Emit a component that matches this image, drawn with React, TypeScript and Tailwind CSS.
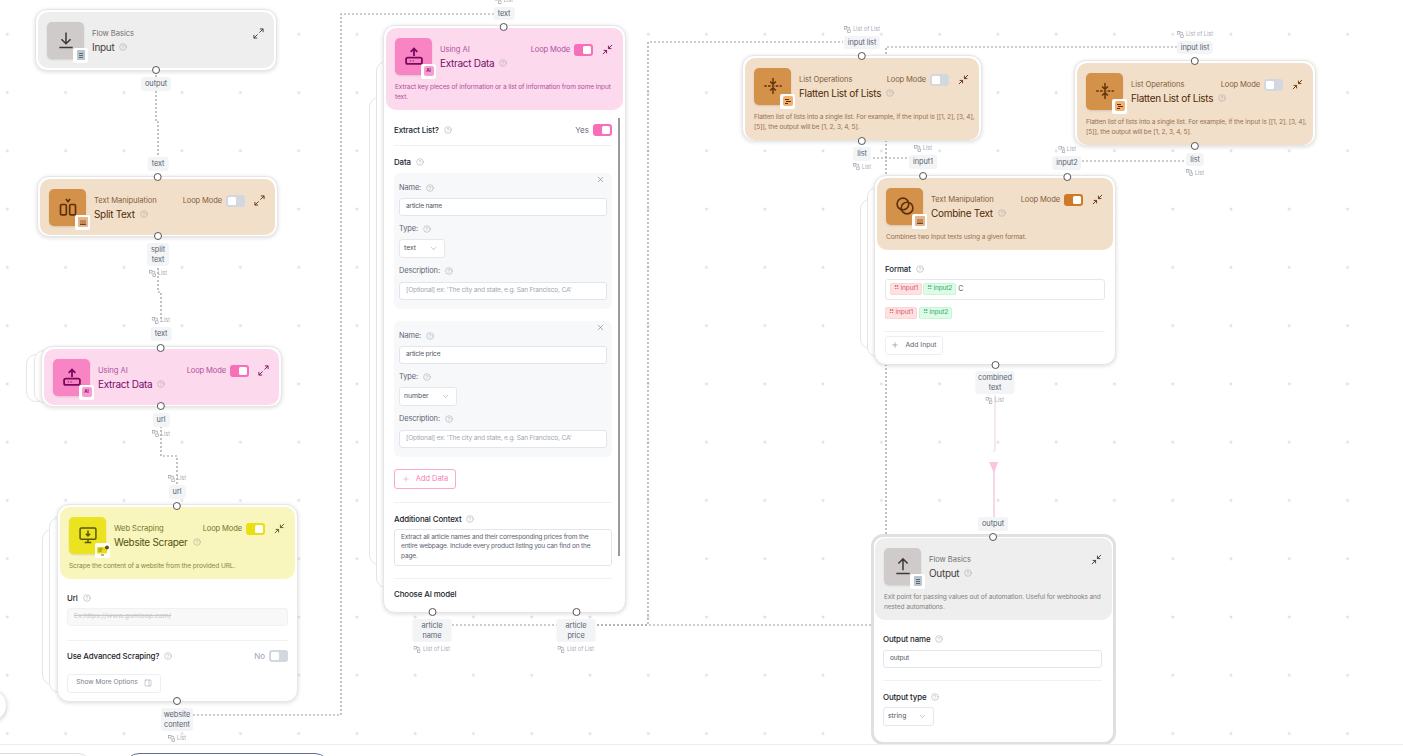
import { ChevronDown, CircleHelp, Plus, X, PanelRight } from "lucide-react";
import type { ReactNode } from "react";

type Theme = "gray" | "orange" | "pink" | "yellow";

const themes = {
  gray: { head: "bg-[#eeeeee]", box: "bg-[#cfcbcb]", ink: "#3d3838", label: "text-[#77716f]", title: "text-[#4a4040]", desc: "text-[#857f7f]", on: "bg-[#8a8a8a]" },
  orange: { head: "bg-[#f2dfca]", box: "bg-[#d3914a]", ink: "#5f3008", label: "text-[#84603c]", title: "text-[#4f2c08]", desc: "text-[#96714f]", on: "bg-[#cf7a26]" },
  pink: { head: "bg-[#fcd9ec]", box: "bg-[#f984c3]", ink: "#7a0a60", label: "text-[#b0509f]", title: "text-[#7a0a6c]", desc: "text-[#b0509f]", on: "bg-[#f76fb8]" },
  yellow: { head: "bg-[#f8f5bd]", box: "bg-[#ebe31f]", ink: "#5a5608", label: "text-[#77752c]", title: "text-[#54520f]", desc: "text-[#8a8840]", on: "bg-[#e8e010]" },
};

function Help({ size = 8 }: { size?: number }) {
  return <CircleHelp size={size} strokeWidth={1.5} className="shrink-0 text-[#a3a3a3]" />;
}

function Toggle({ on, color }: { on: boolean; color?: string }) {
  return (
    <span className={`flex h-[12px] w-[19px] shrink-0 items-center rounded-[3px] p-[2px] ${on ? "justify-end" : "justify-start bg-[#d3d8e0]"} ${on ? color : ""}`}>
      <span className="block h-[8px] w-[8px] rounded-[1.5px] bg-white" />
    </span>
  );
}

function Arrows({ open, ink }: { open: boolean; ink: string }) {
  return (
    <svg width="11" height="11" viewBox="0 0 12 12" fill="none" stroke={ink} strokeWidth="1" className="shrink-0">
      {open ? (
        <>
          <path d="M7 5l4-4M7.5 1H11v3.5" />
          <path d="M1 11l4-4M1 7.5V11h3.5" />
        </>
      ) : (
        <>
          <path d="M11 1L7 5M7 1.8V5h3.2" />
          <path d="M1 11l4-4M1.8 7H5v3.2" />
        </>
      )}
    </svg>
  );
}

function Glyph({ kind, ink }: { kind: string; ink: string }) {
  const common = { width: 20, height: 20, viewBox: "0 0 24 24", fill: "none", stroke: ink, strokeWidth: 1.8 };
  if (kind === "in")
    return <svg {...common}><path d="M12 3v13M6.5 11l5.5 5.5 5.5-5.5M4 21h16" /></svg>;
  if (kind === "out")
    return <svg {...common}><path d="M12 17V4M6.5 9L12 3.5 17.5 9M4 21h16" /></svg>;
  if (kind === "split")
    return (
      <svg {...common} strokeWidth={2}>
        <rect x="3" y="9" width="7" height="12.5" rx="1.5" />
        <rect x="14" y="9" width="7" height="12.5" rx="1.5" />
        <path d="M9.5 2.5l2.5 3 2.5-3" />
      </svg>
    );
  if (kind === "extract")
    return (
      <svg {...common} strokeWidth={2.2}>
        <path d="M12 12V3.5M8 7l4-4 4 4" />
        <rect x="2.5" y="14" width="19" height="7.5" rx="2" />
        <path d="M7 17.8h.8M10.5 17.8h.8" />
      </svg>
    );
  if (kind === "web")
    return (
      <svg {...common}>
        <rect x="2.5" y="3.5" width="19" height="13.5" rx="1.5" />
        <path d="M12 6.5v6.5M9.5 10.5L12 13l2.5-2.5M12 17v4M8 21h8" />
      </svg>
    );
  if (kind === "flat")
    return (
      <svg {...common} strokeWidth={1.7}>
        <path d="M12 2.5V9M8.5 6.5L12 10l3.5-3.5M12 21.5V15M8.5 17.5L12 14l3.5 3.5" />
        <path d="M1.5 12h21" strokeDasharray="3 1.6" />
      </svg>
    );
  return (
    <svg {...common} strokeWidth={2}>
      <circle cx="9.5" cy="9.5" r="7" />
      <circle cx="14.5" cy="14.5" r="7" />
    </svg>
  );
}

function Badge({ kind }: { kind: string }) {
  let inner: ReactNode;
  if (kind === "ai")
    inner = <span className="flex h-[10px] w-[10px] items-center justify-center rounded-[2px] bg-[#fa9ccf] text-[4.5px] font-bold text-[#8a1070]">AI</span>;
  else if (kind === "basic")
    inner = (
      <span className="flex h-[10px] w-[8px] flex-col items-center justify-center gap-[1px] rounded-[1px] bg-[#b9c6cf]">
        <span className="h-[1px] w-[4px] bg-[#5f6b75]" />
        <span className="h-[1px] w-[4px] bg-[#5f6b75]" />
        <span className="h-[1px] w-[4px] bg-[#5f6b75]" />
      </span>
    );
  else if (kind === "web")
    inner = (
      <svg width="12" height="11" viewBox="0 0 12 11">
        <rect x="0" y="2" width="10" height="6.5" rx="1" fill="#e6dc18" />
        <path d="M1.5 4h4M1.5 6h3" stroke="#6e6a10" strokeWidth="0.8" />
        <circle cx="10" cy="2.5" r="2" fill="#5a5608" />
        <path d="M4 10h3" stroke="#6e6a10" />
      </svg>
    );
  else if (kind === "list")
    inner = (
      <span className="flex h-[10px] w-[10px] flex-col justify-center gap-[1px] rounded-[2px] bg-[#f0b070] px-[2px]">
        <span className="h-[1px] w-[4px] bg-[#5f3008]" />
        <span className="ml-[1px] h-[1px] w-[5px] bg-[#5f3008]" />
        <span className="h-[1px] w-[3px] bg-[#5f3008]" />
      </span>
    );
  else
    inner = (
      <span className="flex h-[10px] w-[10px] items-center justify-center rounded-[1px] bg-[#e8b48a]">
        <span className="h-[5px] w-[6px] border-b border-[#6a4420] bg-[#c08858]" />
      </span>
    );
  return (
    <span className="absolute -bottom-[4px] -right-[4px] flex h-[15px] w-[15px] items-center justify-center rounded-[2px] bg-white">
      {inner}
    </span>
  );
}

function Header({
  theme, group, title, kind, badge, loop, open, desc, loopOn,
}: {
  theme: Theme; group: string; title: string; kind: string; badge: string;
  loop?: boolean; loopOn?: boolean; open: boolean; desc?: string;
}) {
  const t = themes[theme];
  return (
    <div className={`rounded-[10px] px-[9px] pt-[9.5px] ${desc ? "pb-[8px]" : "pb-[9px]"} ${t.head}`}>
      <div className="flex items-start">
        <div className={`relative flex h-[37px] w-[37px] shrink-0 items-center justify-center rounded-[5px] shadow-[0_1px_2px_rgba(0,0,0,0.12)] ${t.box}`}>
          <Glyph kind={kind} ink={t.ink} />
          <Badge kind={badge} />
        </div>
        <div className="ml-[8px] min-w-0 flex-1 pt-[7px]">
          <div className="flex h-[10px] items-center">
            <span className={`text-[7.6px] leading-[10px] tracking-[-0.05px] ${t.label}`}>{group}</span>
            <span className="flex-1" />
            {loop && <span className={`mr-[4px] text-[7.6px] leading-[10px] tracking-[-0.15px] ${t.label}`}>Loop Mode</span>}
            {loop && <Toggle on={!!loopOn} color={t.on} />}
            <span className="ml-[9px] mr-[1px]"><Arrows open={open} ink={t.ink} /></span>
          </div>
          <div className="mt-[2px] flex items-center gap-[5px]">
            <span className={`text-[10px] leading-[13px] tracking-[-0.3px] ${t.title}`}>{title}</span>
            <Help />
          </div>
        </div>
      </div>
      {desc && <p className={`-mr-[7px] mt-[7px] text-[6.6px] leading-[10px] tracking-[-0.13px] ${t.desc}`}>{desc}</p>}
    </div>
  );
}

function Card({ className, children }: { className: string; children: ReactNode }) {
  return (
    <div className={`absolute overflow-hidden rounded-[12px] border border-[#e6e6e6] bg-white p-[2px] shadow-[0_1px_4px_rgba(0,0,0,0.14)] ${className}`}>
      {children}
    </div>
  );
}

function Ghost({ className }: { className: string }) {
  return <div className={`absolute rounded-[10px] border border-[#e5e5e5] bg-white ${className}`} />;
}

// a column of handle, port label and list tag hanging off a node
function Stack({ className, children }: { className: string; children: ReactNode }) {
  return <div className={`absolute z-20 flex -translate-x-1/2 flex-col items-center ${className}`}>{children}</div>;
}

function Handle() {
  return <span className="block h-[8px] w-[8px] shrink-0 rounded-full border border-[#555] bg-white" />;
}

function Port({ className = "", children }: { className?: string; children: ReactNode }) {
  return (
    <span className={`flex shrink-0 items-center justify-center rounded-[3px] bg-[#f3f4f6] px-[4px] py-[2px] text-center text-[7.4px] leading-[9.5px] tracking-[-0.1px] text-[#5b6472] ${className}`}>
      {children}
    </span>
  );
}

function Tag({ children = "List" }: { children?: string }) {
  return (
    <span className="flex h-[8px] shrink-0 items-center gap-[2px] whitespace-nowrap text-[5.6px] leading-[8px] text-[#a7adb8]">
      <svg width="7" height="7" viewBox="0 0 8 8" fill="none" stroke="#9aa0aa" strokeWidth="0.8">
        <rect x="0.5" y="0.5" width="3" height="3" />
        <rect x="4.5" y="4.5" width="3" height="3" />
        <path d="M4 1.5h2.5V4" />
      </svg>
      {children}
    </span>
  );
}

function FieldLabel({ children, className = "", help = true }: { children: string; className?: string; help?: boolean }) {
  return (
    <div className={`flex h-[10px] items-center gap-[5px] ${className}`}>
      <span className="text-[7.9px] font-medium leading-[10px] tracking-[-0.12px] text-[#20242c]">{children}</span>
      {help && <Help />}
    </div>
  );
}

function SubLabel({ children, className = "" }: { children: string; className?: string }) {
  return (
    <div className={`flex h-[10px] items-center gap-[5px] ${className}`}>
      <span className="text-[7.4px] leading-[10px] tracking-[-0.1px] text-[#5c6370]">{children}</span>
      <Help />
    </div>
  );
}

function Input({ children, muted, className = "" }: { children: string; muted?: boolean; className?: string }) {
  return (
    <div className={`flex h-[18px] items-center rounded-[3px] border border-[#e2e5ec] bg-white px-[6px] text-[6.6px] tracking-[-0.2px] ${muted ? "text-[#a2a8b3]" : "text-[#4e5563]"} ${className}`}>
      {children}
    </div>
  );
}

function Select({ children, className }: { children: string; className: string }) {
  return (
    <div className={`flex h-[19px] items-center justify-between rounded-[3px] border border-[#e5e7eb] bg-white pl-[4px] pr-[6px] text-[6.8px] text-[#4e5563] ${className}`}>
      {children}
      <ChevronDown size={9} strokeWidth={1.2} className="text-[#7b8190]" />
    </div>
  );
}

function Rule({ className }: { className: string }) {
  return <div className={`h-px bg-[#f0f1f3] ${className}`} />;
}

function DataPanel({ name, type, selectW, className }: { name: string; type: string; selectW: string; className: string }) {
  return (
    <div className={`relative h-[136px] rounded-[6px] bg-[#f7f8fa] px-[5px] pt-[10px] ${className}`}>
      <X size={9} strokeWidth={1.2} className="absolute right-[7px] top-[2px] text-[#4b5563]" />
      <SubLabel>Name:</SubLabel>
      <Input className="mt-[5px]">{name}</Input>
      <SubLabel className="mt-[8px]">Type:</SubLabel>
      <Select className={`mt-[5px] ${selectW}`}>{type}</Select>
      <SubLabel className="mt-[8px]">Description:</SubLabel>
      <Input muted className="mt-[6px]">[Optional] ex: 'The city and state, e.g. San Francisco, CA'</Input>
    </div>
  );
}

function Chip({ red, children }: { red?: boolean; children: string }) {
  return (
    <span className={`flex h-[12px] items-center rounded-[2px] border px-[3px] text-[6.6px] tracking-[-0.15px] ${red ? "border-[#fcd5d5] bg-[#fee2e2] text-[#d9576a]" : "border-[#c9f5d8] bg-[#dcfce7] text-[#3aa86a]"}`}>
      ⠿&nbsp;{children}
    </span>
  );
}

function Canvas() {
  const dash = { fill: "none", stroke: "#999999", strokeWidth: 1.2, strokeDasharray: "2 2" };
  return (
    <svg className="absolute inset-0" width="1403" height="756">
      <defs>
        <pattern id="dots" x="7.3" y="34.3" width="58.27" height="58.27" patternUnits="userSpaceOnUse">
          <path d="M-1.5 0h3M0-1.5v3M56.77 0h3M58.27-1.5v3M-1.5 58.27h3M0 56.77v3M56.77 58.27h3M58.27 56.77v3" stroke="#cfcfcf" strokeWidth="0.8" />
        </pattern>
      </defs>
      <rect width="1403" height="756" fill="url(#dots)" />
      <path d="M156 75V122H158V172" {...dash} />
      <path d="M158 264V292H161V322" {...dash} />
      <path d="M161 426V456H177V486" {...dash} />
      <path d="M193 715H341V14H495" {...dash} />
      <path d="M452 625H558" {...dash} />
      <path d="M597 625H648V42H843" {...dash} />
      <path d="M597 625H886V47H1177" {...dash} />
      <path d="M873 158H911" {...dash} />
      <path d="M1082 161H1186" {...dash} />
      <path d="M995 395V450L993 452" fill="none" stroke="#e8d4de" strokeWidth="1" />
      <path d="M994 462V520" fill="none" stroke="#f9c4de" strokeWidth="1.4" />
      <path d="M989 462H998L994 473Z" fill="#f9c4de" />
    </svg>
  );
}

export default function App() {
  return (
    <div className="relative h-[756px] w-[1403px] overflow-hidden bg-white font-['Inter',sans-serif]">
      <Canvas />

      {/* Input */}
      <Card className="left-[35px] top-[9px] h-[62px] w-[242px]">
        <Header theme="gray" group="Flow Basics" title="Input" kind="in" badge="basic" open />
      </Card>

      {/* Split Text */}
      <Card className="left-[37px] top-[176px] h-[61px] w-[241px]">
        <Header theme="orange" group="Text Manipulation" title="Split Text" kind="split" badge="text" loop open />
      </Card>

      {/* Extract Data, collapsed */}
      <Ghost className="left-[26px] top-[354px] h-[48px] w-[60px]" />
      <Ghost className="left-[34px] top-[350px] h-[53px] w-[60px]" />
      <Card className="left-[41px] top-[346px] h-[61px] w-[241px]">
        <Header theme="pink" group="Using AI" title="Extract Data" kind="extract" badge="ai" loop loopOn open />
      </Card>

      {/* Website Scraper */}
      <Ghost className="left-[42px] top-[529px] h-[156px] w-[60px]" />
      <Ghost className="left-[49px] top-[517px] h-[176px] w-[60px]" />
      <Card className="left-[57px] top-[504px] h-[198px] w-[241px]">
        <Header theme="yellow" group="Web Scraping" title="Website Scraper" kind="web" badge="web" loop loopOn open={false} desc="Scrape the content of a website from the provided URL." />
        <div className="px-[7px] pt-[14px]">
          <FieldLabel>Url</FieldLabel>
          <div className="mt-[5px] flex h-[18px] items-center rounded-[3px] border border-[#f0f1f3] bg-[#f8f8f8] px-[6px] text-[6.8px] text-[#c6c8cc] line-through">
            Ex:https://www.gumloop.com/
          </div>
          <Rule className="mt-[14px]" />
          <div className="mt-[9px] flex items-center">
            <FieldLabel>Use Advanced Scraping?</FieldLabel>
            <span className="flex-1" />
            <span className="mr-[4px] text-[8px] text-[#9ca3af]">No</span>
            <Toggle on={false} />
          </div>
          <div className="mt-[12px] flex h-[19px] w-[94px] items-center justify-center gap-[6px] rounded-[3px] border border-[#eceef1] text-[6.6px] text-[#7b8190]">
            Show More Options
            <PanelRight size={8} strokeWidth={1.2} />
          </div>
        </div>
      </Card>

      {/* Extract Data, open */}
      <Ghost className="left-[369px] top-[97px] h-[468px] w-[60px]" />
      <Ghost className="left-[376px] top-[61px] h-[527px] w-[60px]" />
      <Card className="left-[383px] top-[25px] h-[588px] w-[243px]">
        <Header theme="pink" group="Using AI" title="Extract Data" kind="extract" badge="ai" loop loopOn open={false} desc="Extract key pieces of information or a list of information from some input text." />
        <div className="relative px-[8px] pt-[14px]">
          <span className="absolute right-[3px] top-[8px] h-[438px] w-[2px] bg-[#9a9a9a]" />
          <div className="mr-[3px] flex items-center">
            <FieldLabel>Extract List?</FieldLabel>
            <span className="flex-1" />
            <span className="mr-[4px] text-[8px] text-[#6b7280]">Yes</span>
            <Toggle on color="bg-[#f76fb8]" />
          </div>
          <Rule className="mr-[3px] mt-[9px]" />
          <FieldLabel className="mt-[11px]">Data</FieldLabel>
          <DataPanel className="mr-[3px] mt-[6px]" name="article name" type="text" selectW="w-[46px]" />
          <DataPanel className="mr-[3px] mt-[12px]" name="article price" type="number" selectW="w-[58px]" />
          <div className="mt-[12px] flex h-[20px] w-[62px] items-center justify-center gap-[6px] rounded-[3px] border border-[#f9a8d0] text-[7.4px] text-[#f47ab5]">
            <Plus size={8} strokeWidth={1.4} />
            Add Data
          </div>
          <Rule className="mr-[3px] mt-[13px]" />
          <FieldLabel className="mt-[11px]">Additional Context</FieldLabel>
          <div className="mr-[3px] mt-[5px] h-[37px] rounded-[3px] border border-[#e2e5ec] px-[6px] pt-[3px] text-[6.6px] leading-[9.5px] tracking-[-0.2px] text-[#5c6370]">
            Extract all article names and their corresponding prices from the entire webpage. Include every product listing you can find on the page.
          </div>
          <Rule className="mr-[3px] mt-[12px]" />
          <FieldLabel className="mt-[10px]" help={false}>Choose AI model</FieldLabel>
        </div>
      </Card>

      {/* Flatten */}
      <Card className="left-[742px] top-[55px] h-[86px] w-[240px]">
        <Header theme="orange" group="List Operations" title="Flatten List of Lists" kind="flat" badge="list" loop open={false} desc="Flatten list of lists into a single list. For example, if the input is [[1, 2], [3, 4], [5]], the output will be [1, 2, 3, 4, 5]." />
      </Card>
      <Card className="left-[1074px] top-[60px] h-[86px] w-[242px]">
        <Header theme="orange" group="List Operations" title="Flatten List of Lists" kind="flat" badge="list" loop open={false} desc="Flatten list of lists into a single list. For example, if the input is [[1, 2], [3, 4], [5]], the output will be [1, 2, 3, 4, 5]." />
      </Card>

      {/* Combine Text */}
      <Ghost className="left-[860px] top-[199px] h-[150px] w-[60px]" />
      <Ghost className="left-[867px] top-[187px] h-[170px] w-[60px]" />
      <Card className="left-[874px] top-[175px] h-[190px] w-[242px]">
        <Header theme="orange" group="Text Manipulation" title="Combine Text" kind="combine" badge="text" loop loopOn open={false} desc="Combines two input texts using a given format." />
        <div className="px-[8px] pt-[14px]">
          <FieldLabel>Format</FieldLabel>
          <div className="mt-[5px] flex h-[21px] items-center gap-[1px] rounded-[3px] border border-[#e5e7eb] px-[4px] text-[7px] text-[#4e5563]">
            <Chip red>input1</Chip>
            <Chip>input2</Chip>
            <span className="ml-[1px]">C</span>
          </div>
          <div className="mt-[7px] flex gap-[2px]">
            <Chip red>input1</Chip>
            <Chip>input2</Chip>
          </div>
          <Rule className="mt-[12px]" />
          <div className="mt-[4px] flex h-[19px] w-[58px] items-center justify-center gap-[6px] rounded-[3px] border border-[#eceef1] text-[6.8px] text-[#5c6370]">
            <Plus size={8} strokeWidth={1.4} />
            Add Input
          </div>
        </div>
      </Card>

      {/* Output */}
      <div className="absolute left-[871px] top-[534px] h-[211px] w-[245px] overflow-hidden rounded-[12px] border-[3px] border-[#e0e0e0] bg-white p-px">
        <Header theme="gray" group="Flow Basics" title="Output" kind="out" badge="basic" open={false} desc="Exit point for passing values out of automation. Useful for webhooks and nested automations." />
        <div className="pl-[8px] pr-[10px] pt-[14px]">
          <FieldLabel>Output name</FieldLabel>
          <Input className="mt-[6px]">output</Input>
          <Rule className="mt-[12px]" />
          <FieldLabel className="mt-[11px]">Output type</FieldLabel>
          <Select className="mt-[5px] w-[51px]">string</Select>
        </div>
      </div>

      {/* Ports */}
      <Stack className="left-[156px] top-[66px] gap-[3px]">
        <Handle />
        <Port>output</Port>
      </Stack>
      <Stack className="left-[158px] top-[157px] gap-[2px]">
        <Port>text</Port>
        <Handle />
      </Stack>
      <Stack className="left-[158px] top-[232px] gap-[3px]">
        <Handle />
        <Port className="w-[22px]">split text</Port>
        <Tag />
      </Stack>
      <Stack className="left-[161px] top-[316px] gap-[3px]">
        <Tag />
        <Port>text</Port>
        <Handle />
      </Stack>
      <Stack className="left-[161px] top-[402px] gap-[3px]">
        <Handle />
        <Port>url</Port>
        <Tag />
      </Stack>
      <Stack className="left-[177px] top-[474px] gap-[3px]">
        <Tag />
        <Port>url</Port>
        <Handle />
      </Stack>
      <Stack className="left-[177px] top-[697px] gap-[3px]">
        <Handle />
        <Port className="w-[32px]">website content</Port>
        <Tag />
      </Stack>

      <Stack className="left-[504px] top-[-4px] gap-[2.5px]">
        <Tag />
        <Port>text</Port>
        <Handle />
      </Stack>
      <Stack className="left-[432px] top-[608px] gap-[3px]">
        <Handle />
        <Port className="w-[39px]">article name</Port>
        <Tag>List of List</Tag>
      </Stack>
      <Stack className="left-[576px] top-[608px] gap-[3px]">
        <Handle />
        <Port className="w-[39px]">article price</Port>
        <Tag>List of List</Tag>
      </Stack>

      <Stack className="left-[862px] top-[25px] gap-[2.5px]">
        <Tag>List of List</Tag>
        <Port>input list</Port>
        <Handle />
      </Stack>
      <Stack className="left-[862px] top-[137px] gap-[2px]">
        <Handle />
        <Port>list</Port>
        <Tag />
      </Stack>
      <Stack className="left-[923px] top-[144px] gap-[3px]">
        <Tag />
        <Port>input1</Port>
        <Handle />
      </Stack>

      <Stack className="left-[1195px] top-[30px] gap-[2.5px]">
        <Tag>List of List</Tag>
        <Port>input list</Port>
        <Handle />
      </Stack>
      <Stack className="left-[1195px] top-[142px] gap-[2.5px]">
        <Handle />
        <Port>list</Port>
        <Tag />
      </Stack>
      <Stack className="left-[1067px] top-[145px] gap-[3px]">
        <Tag />
        <Port>input2</Port>
        <Handle />
      </Stack>

      <Stack className="left-[995px] top-[361px] gap-[2px]">
        <Handle />
        <Port className="w-[39px]">combined text</Port>
        <Tag />
      </Stack>
      <Stack className="left-[993px] top-[517px] gap-[2px]">
        <Port>output</Port>
        <Handle />
      </Stack>

      {/* edge-of-canvas control */}
      <div className="absolute -left-[25px] top-[690px] h-[31px] w-[31px] rounded-full bg-white shadow-[0_1px_5px_rgba(0,0,0,0.25)]" />

      {/* bottom bar */}
      <div className="absolute inset-x-0 top-[744px] z-30 flex h-[12px] gap-[31px] overflow-hidden border-t border-[#ececec] bg-white pt-[8px]">
        <div className="-ml-[18px] h-[30px] w-[111px] shrink-0 rounded-full border border-[#dddddd] bg-white" />
        <div className="h-[30px] w-[206px] shrink-0 rounded-full border border-[#64708a] bg-white" />
      </div>
    </div>
  );
}
